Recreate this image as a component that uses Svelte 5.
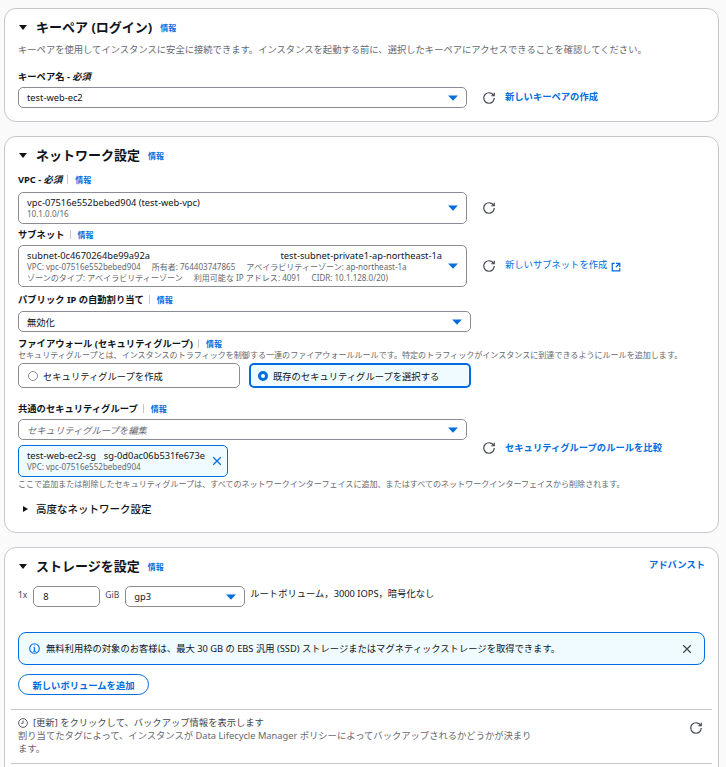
<script lang="ts">
</script>

{#snippet caret()}
  <svg class="caret" viewBox="0 0 16 16"><path d="M1.5 4.5h13L8 11.5z" /></svg>
{/snippet}

{#snippet refresh()}
  <svg class="icon refresh" viewBox="0 0 16 16">
    <path d="M15 8c0 3.87-3.13 7-7 7s-7-3.13-7-7 3.13-7 7-7c2.79 0 5.2 1.63 6.33 3.99" />
    <path d="M15 1v4h-4" />
  </svg>
{/snippet}

{#snippet close(cls)}
  <svg class="icon {cls}" viewBox="0 0 16 16"><path d="m2 2 12 12M14 2 2 14" /></svg>
{/snippet}

<main class="page">
  <section class="card keypair">
    <h2><span class="tri"></span>キーペア (ログイン)<a class="info head-info" href="#a">情報</a></h2>
    <p class="desc">キーペアを使用してインスタンスに安全に接続できます。インスタンスを起動する前に、選択したキーペアにアクセスできることを確認してください。</p>
    <div class="label kp-label"><b>キーペア名 - <i>必須</i></b></div>
    <div class="with-action">
      <div class="select h21"><span>test-web-ec2</span>{@render caret()}</div>
      {@render refresh()}
      <a class="link strong" href="#a">新しいキーペアの作成</a>
    </div>
  </section>

  <section class="card network">
    <h2><span class="tri"></span>ネットワーク設定<a class="info head-info" href="#a">情報</a></h2>

    <div class="label vpc-label"><b>VPC - <i>必須</i></b><span class="sep"></span><a class="info" href="#a">情報</a></div>
    <div class="with-action">
      <div class="select vpc">
        <div class="lines">
          <span>vpc-07516e552bebed904 (test-web-vpc)</span>
          <small>10.1.0.0/16</small>
        </div>
        {@render caret()}
      </div>
      {@render refresh()}
    </div>

    <div class="label subnet-label"><b>サブネット</b><span class="sep"></span><a class="info" href="#a">情報</a></div>
    <div class="with-action">
      <div class="select subnet">
        <div class="lines">
          <span class="subnet-main"><span>subnet-0c4670264be99a92a</span><span>test-subnet-private1-ap-northeast-1a</span></span>
          <small class="tags"><span>VPC: vpc-07516e552bebed904</span><span>所有者: 764403747865</span><span>アベイラビリティーゾーン: ap-northeast-1a</span></small>
          <small class="tags"><span>ゾーンのタイプ: アベイラビリティーゾーン</span><span>利用可能な IP アドレス: 4091</span><span>CIDR: 10.1.128.0/20)</span></small>
        </div>
        {@render caret()}
      </div>
      {@render refresh()}
      <a class="link" href="#a">新しいサブネットを作成</a>
      <svg class="icon ext" viewBox="0 0 16 16"><path d="M14 8.01v-6H8M14.02 2 8 8.01M6 2.01H2v12h12v-3.99" /></svg>
    </div>

    <div class="label ip-label"><b>パブリック IP の自動割り当て</b><span class="sep"></span><a class="info" href="#a">情報</a></div>
    <div class="select h21 wide"><span>無効化</span>{@render caret()}</div>

    <div class="label fw-label"><b>ファイアウォール (セキュリティグループ)</b><span class="sep"></span><a class="info" href="#a">情報</a></div>
    <p class="help fw-help">セキュリティグループとは、インスタンスのトラフィックを制御する一連のファイアウォールルールです。特定のトラフィックがインスタンスに到達できるようにルールを追加します。</p>
    <div class="tiles">
      <label class="tile"><span class="radio"></span>セキュリティグループを作成</label>
      <label class="tile on"><span class="radio"></span>既存のセキュリティグループを選択する</label>
    </div>

    <div class="label sg-label"><b>共通のセキュリティグループ</b><span class="sep"></span><a class="info" href="#a">情報</a></div>
    <div class="sg-wrap">
      <div class="sg-left">
        <div class="select h21"><em>セキュリティグループを編集</em>{@render caret()}</div>
        <div class="token">
          <div class="lines">
            <span class="token-main"><span>test-web-ec2-sg</span><span>sg-0d0ac06b531fe673e</span></span>
            <small>VPC: vpc-07516e552bebed904</small>
          </div>
          {@render close('token-x')}
        </div>
      </div>
      {@render refresh()}
      <a class="link strong" href="#a">セキュリティグループのルールを比較</a>
    </div>
    <p class="help sg-help">ここで追加または削除したセキュリティグループは、すべてのネットワークインターフェイスに追加、またはすべてのネットワークインターフェイスから削除されます。</p>

    <h3><span class="tri side"></span>高度なネットワーク設定</h3>
  </section>

  <section class="card storage">
    <div class="store-head">
      <h2><span class="tri"></span>ストレージを設定<a class="info head-info" href="#a">情報</a></h2>
      <a class="link strong adv" href="#a">アドバンスト</a>
    </div>
    <div class="volume">
      <span class="mult">1x</span>
      <div class="input">8</div>
      <span class="mult">GiB</span>
      <div class="select h21 gp3"><span>gp3</span>{@render caret()}</div>
      <span class="vol-note">ルートボリューム，3000 IOPS，暗号化なし</span>
    </div>

    <div class="alert">
      <svg class="icon info-i" viewBox="0 0 16 16">
        <circle cx="8" cy="8" r="7" />
        <path d="M8 12V7H6.5M6 12h4M7.5 4h1" />
      </svg>
      <span class="alert-text">無料利用枠の対象のお客様は、最大 30 GB の EBS 汎用 (SSD) ストレージまたはマグネティックストレージを取得できます。</span>
      {@render close('alert-x')}
    </div>

    <button class="add">新しいボリュームを追加</button>

    <div class="backup">
      <div class="backup-text">
        <div class="backup-title">
          <svg class="icon clock" viewBox="0 0 16 16">
            <circle cx="8" cy="8" r="7" />
            <path d="M8 4v4.5H5" />
          </svg>
          [更新] をクリックして、バックアップ情報を表示します
        </div>
        <p class="backup-desc">割り当てたタグによって、インスタンスが Data Lifecycle Manager ポリシーによってバックアップされるかどうかが決まります。</p>
      </div>
      {@render refresh()}
    </div>
  </section>
</main>

<style>
  :global(html), :global(body) {
    margin: 0;
    height: 767px;
    overflow: hidden;
    background: #fafafa;
  }

  .page {
    padding: 8px 7px 0 4px;
    font-family: "Noto Sans", "Noto Sans CJK JP", sans-serif;
    font-size: 9.3px;
    color: #0f141a;
  }

  .card {
    box-sizing: border-box;
    background: #fff;
    border: 1px solid #c6c6cd;
    border-radius: 12px;
    padding: 0 13px;
    margin-bottom: 14px;
  }

  .keypair { height: 114px; }
  .network { height: 397px; }
  .storage { height: 400px; }

  h2 {
    display: flex;
    align-items: center;
    margin: 0;
    padding-top: 9px;
    height: 18px;
    font-size: 13px;
    font-weight: 700;
    line-height: 18px;
  }

  h3 {
    display: flex;
    align-items: center;
    margin: 13px 0 0 5px;
    height: 14px;
    font-size: 10.5px;
    font-weight: 500;
    line-height: 14px;
  }

  .tri {
    width: 0;
    height: 0;
    margin: 0 9px 0 1px;
    border-style: solid;
    border-width: 5px 4.5px 0;
    border-color: #0f141a transparent transparent;
  }

  .tri.side {
    margin: 0 8px 0 0;
    border-width: 3.5px 0 3.5px 5px;
    border-color: transparent transparent transparent #0f141a;
  }

  a { text-decoration: none; }

  .info {
    color: #006ce0;
    font-size: 8px;
    font-weight: 700;
    line-height: 12px;
  }

  .head-info { margin-left: 8px; padding-top: 2px; }

  .desc {
    margin: 7px 0 0;
    color: #656871;
    line-height: 14px;
  }

  .label {
    display: flex;
    align-items: center;
    height: 13px;
    line-height: 13px;
  }

  .sep {
    width: 1px;
    height: 9px;
    margin: 0 7px 0 5px;
    background: #c6c6cd;
  }

  .kp-label { margin-top: 13px; }
  .vpc-label { margin-top: 9px; }
  .subnet-label { margin-top: 4px; }
  .ip-label { margin-top: 6px; }
  .fw-label { margin-top: 5px; }
  .sg-label { margin-top: 14px; }

  .with-action {
    display: flex;
    align-items: center;
  }

  .kp-label + .with-action { margin-top: 4px; }
  .vpc-label + .with-action { margin-top: 6px; }
  .subnet-label + .with-action { margin-top: 4px; }

  .select {
    box-sizing: border-box;
    display: flex;
    flex: none;
    align-items: center;
    justify-content: space-between;
    width: 449px;
    padding: 0 8px;
    background: #fff;
    border: 1px solid #8c8c94;
    border-radius: 5px;
  }

  .h21 { height: 21px; }
  .vpc { height: 32px; }
  .subnet { height: 42px; }
  .wide { width: 453px; margin-top: 5px; }

  .select em { color: #656871; }

  .lines {
    display: flex;
    flex: 1;
    flex-direction: column;
    min-width: 0;
    line-height: 11px;
  }

  small {
    color: #656871;
    font-size: 8.05px;
    line-height: 11px;
  }

  .subnet-main {
    display: flex;
    justify-content: space-between;
    margin-right: -1px;
  }

  .tags {
    display: flex;
    gap: 11px;
    white-space: nowrap;
  }

  .caret {
    flex: none;
    width: 12px;
    height: 12px;
    margin: 0 -1px 0 6px;
    fill: #006ce0;
  }

  .icon {
    flex: none;
    fill: none;
    stroke: #424650;
    stroke-width: 1.6;
  }

  .refresh {
    width: 12px;
    height: 12px;
    margin: 0 10px 0 16px;
  }

  .link {
    color: #006ce0;
    font-size: 9.3px;
    line-height: 14px;
    margin-bottom: 2px;
  }

  .strong { font-weight: 700; }

  .ext {
    width: 10px;
    height: 10px;
    margin: 2px 0 0 4px;
    stroke: #006ce0;
    stroke-width: 2;
  }

  .help {
    margin: 0;
    color: #656871;
    font-size: 8.05px;
    line-height: 11px;
  }

  .fw-help { margin-top: -1px; }

  .tiles {
    display: flex;
    gap: 9px;
    width: 453px;
    margin-top: 3px;
  }

  .tile {
    box-sizing: border-box;
    display: flex;
    flex: 1;
    align-items: center;
    height: 25px;
    padding-left: 9px;
    border: 1px solid #8c8c94;
    border-radius: 5px;
  }

  .tile.on {
    background: #f0fbff;
    border: 2px solid #006ce0;
    padding-left: 7px;
  }

  .radio {
    box-sizing: border-box;
    width: 10px;
    height: 10px;
    margin-right: 5px;
    border: 1px solid #8c8c94;
    border-radius: 50%;
  }

  .on .radio { border: 3px solid #006ce0; background: #fff; }

  .sg-wrap {
    display: flex;
    align-items: center;
    margin-top: 4px;
  }

  .sg-wrap .link { margin-bottom: 0; }

  .sg-left {
    display: flex;
    flex-direction: column;
    gap: 5px;
    width: 449px;
  }

  .token {
    box-sizing: border-box;
    display: flex;
    align-items: center;
    width: 210px;
    height: 32px;
    padding: 0 5px 0 8px;
    background: #f0fbff;
    border: 1px solid #006ce0;
    border-radius: 5px;
  }

  .token-main {
    display: flex;
    gap: 8px;
    white-space: nowrap;
  }

  .token-x {
    width: 10px;
    height: 10px;
    stroke: #006ce0;
    stroke-width: 2;
  }

  .sg-help { margin-top: 1px; }

  .store-head {
    display: flex;
    justify-content: space-between;
  }

  .adv { margin: 10px 0 0; }

  .volume {
    display: flex;
    align-items: flex-start;
    margin-top: 11px;
  }

  .mult {
    font-size: 8.5px;
    line-height: 17px;
    color: #424650;
  }

  .input {
    box-sizing: border-box;
    width: 67px;
    height: 21px;
    margin: 0 5px 0 6px;
    padding-left: 9px;
    border: 1px solid #8c8c94;
    border-radius: 5px;
    line-height: 19px;
  }

  .gp3 { width: 120px; margin-left: 6px; }

  .vol-note {
    margin: 1px 0 0 5px;
    line-height: 14px;
  }

  .alert {
    box-sizing: border-box;
    display: flex;
    align-items: center;
    width: 687px;
    height: 33px;
    margin-top: 25px;
    padding: 0 12px 0 10px;
    background: #f0fbff;
    border: 1px solid #006ce0;
    border-radius: 8px;
  }

  .info-i {
    width: 11px;
    height: 11px;
    stroke: #006ce0;
    stroke-width: 1.6;
  }

  .alert-text {
    flex: 1;
    margin: 0 0 2px 6px;
  }

  .alert-x {
    width: 10px;
    height: 10px;
    stroke-width: 2;
  }

  .add {
    display: block;
    box-sizing: border-box;
    width: 131px;
    height: 21px;
    margin-top: 9px;
    padding: 0;
    background: #fff;
    border: 1px solid #006ce0;
    border-radius: 11px;
    color: #006ce0;
    font: 700 9.3px "Noto Sans", "Noto Sans CJK JP", sans-serif;
  }

  .backup {
    box-sizing: border-box;
    display: flex;
    align-items: flex-start;
    height: 55px;
    margin: 14px -7px 0 -7px;
    padding: 6px 7px 0;
    border-top: 1px solid #c6c6cd;
    border-bottom: 1px solid #c6c6cd;
  }

  .backup-text { flex: 1; }

  .backup-title {
    display: flex;
    align-items: center;
    line-height: 13px;
    color: #424650;
  }

  .clock {
    width: 10px;
    height: 10px;
    margin-right: 5px;
    stroke-width: 1.4;
  }

  .backup-desc {
    margin: 0;
    width: 521px;
    color: #656871;
    line-height: 13px;
  }

  .backup .refresh { margin: 6px 3px 0 16px; }
</style>
